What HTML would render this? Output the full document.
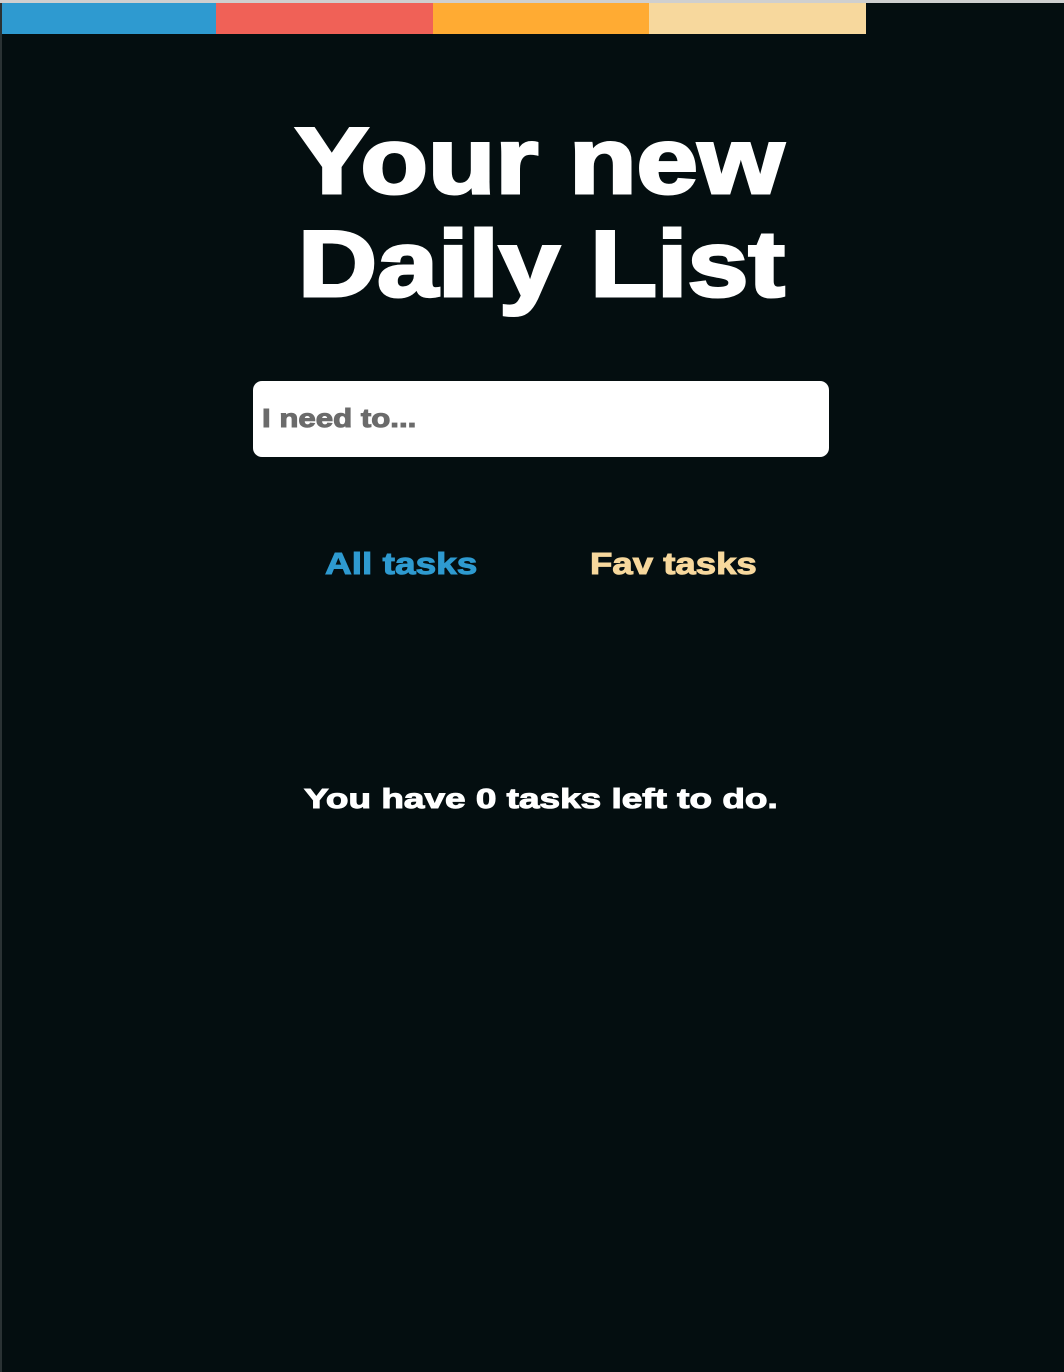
<!DOCTYPE html>
<html><head><style>
html,body{margin:0;padding:0}
body{width:1064px;height:1372px;background:#040e10;position:relative;overflow:hidden;font-family:"Liberation Sans",sans-serif;font-weight:bold}
.top{position:absolute;left:0;top:0;width:1064px;height:3px;background:#cfcfcf}
.bar{position:absolute;top:3px;height:31px}
.t{position:absolute;line-height:1;white-space:nowrap;transform-origin:0 0;letter-spacing:0}
.lb{position:absolute;left:0;top:3px;width:2px;height:1369px;background:#2a3234}
</style></head><body>
<div class="top"></div>
<div class="bar" style="left:0;width:216px;background:#2e9ad0"></div>
<div class="bar" style="left:216px;width:217px;background:#f06157"></div>
<div class="bar" style="left:433px;width:216px;background:#ffab33"></div>
<div class="bar" style="left:649px;width:217px;background:#f7d89d"></div>
<div class="lb"></div>
<div class="t" style="left:295px;top:114px;font-size:94px;color:#fff;font-weight:900;transform:scaleX(1.175);-webkit-text-stroke:3px #fff">Your new</div>
<div class="t" style="left:298px;top:217px;font-size:94px;color:#fff;font-weight:900;transform:scaleX(1.165);-webkit-text-stroke:3px #fff">Daily List</div>
<div style="position:absolute;left:253px;top:381px;width:576px;height:76px;background:#fff;border-radius:9px"></div>
<div class="t" style="left:262px;top:405px;font-size:26px;color:#6b6b6b;transform:scaleX(1.2);-webkit-text-stroke:1px #6b6b6b">I need to...</div>
<div class="t" style="left:325px;top:548px;font-size:31px;color:#2e9ad0;transform:scaleX(1.195);-webkit-text-stroke:1px #2e9ad0">All tasks</div>
<div class="t" style="left:590px;top:548px;font-size:31px;color:#f7d89d;transform:scaleX(1.18);-webkit-text-stroke:1px #f7d89d">Fav tasks</div>
<div class="t" style="left:304px;top:785px;font-size:28px;color:#fff;transform:scaleX(1.32);-webkit-text-stroke:1px #fff">You have 0 tasks left to do.</div>
</body></html>
